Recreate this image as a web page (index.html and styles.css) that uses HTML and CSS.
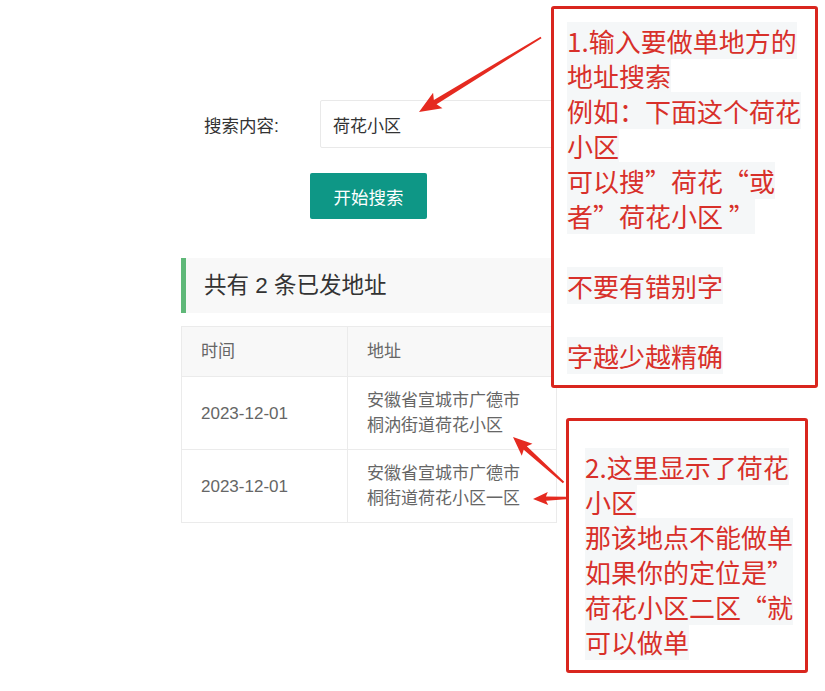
FILE: index.html
```html
<!DOCTYPE html>
<html lang="zh-CN">
<head>
<meta charset="utf-8">
<title>搜索已发地址</title>
<link rel="stylesheet" href="styles.css">
</head>
<body>
<div class="page">
  <form class="search">
    <div class="search-row">
      <label class="search-label">搜索内容:</label>
      <input class="search-input" type="text" value="荷花小区">
    </div>
    <div class="search-actions">
      <button class="btn" type="button">开始搜索</button>
    </div>
  </form>
  <div class="quote">共有 2 条已发地址</div>
  <table class="table">
    <colgroup><col class="col-time"><col class="col-addr"></colgroup>
    <thead>
      <tr><th>时间</th><th>地址</th></tr>
    </thead>
    <tbody>
      <tr><td>2023-12-01</td><td>安徽省宣城市广德市<br>桐汭街道荷花小区</td></tr>
      <tr><td>2023-12-01</td><td>安徽省宣城市广德市<br>桐街道荷花小区一区</td></tr>
    </tbody>
  </table>
</div>

<div class="note note-1">
  <div class="line"><span>1.输入要做单地方的</span></div>
  <div class="line"><span>地址搜索</span></div>
  <div class="line"><span>例如：下面这个荷花</span></div>
  <div class="line"><span>小区</span></div>
  <div class="line"><span>可以搜”荷花“或</span></div>
  <div class="line"><span>者”荷花小区 ”</span></div>
  <div class="line"></div>
  <div class="line"><span>不要有错别字</span></div>
  <div class="line"></div>
  <div class="line"><span>字越少越精确</span></div>
</div>

<div class="note note-2">
  <div class="line"><span>2.这里显示了荷花</span></div>
  <div class="line"><span>小区</span></div>
  <div class="line"><span>那该地点不能做单</span></div>
  <div class="line"><span>如果你的定位是”</span></div>
  <div class="line"><span>荷花小区二区“就</span></div>
  <div class="line"><span>可以做单</span></div>
</div>

<svg class="arrows" width="825" height="691" viewBox="0 0 825 691" xmlns="http://www.w3.org/2000/svg">
  <g fill="#e52a20">
    <polygon transform="translate(419,112) rotate(-31.4)" points="0,0 22,-9 19,-2.6 143,-0.9 143,0.9 19,2.6 22,9"/>
    <polygon transform="translate(513,437) rotate(42)" points="0,0 19,-8 16.5,-2.3 68,-1 68,1 16.5,2.3 19,8"/>
    <polygon transform="translate(533,499) rotate(-1.7)" points="0,0 15,-6.5 13,-2.2 33,-1.2 33,1.2 13,2.2 15,6.5"/>
  </g>
</svg>
</body>
</html>
```

FILE: styles.css
```css
html, body {
  margin: 0;
  padding: 0;
  background: #ffffff;
}

body {
  font-family: "Liberation Sans", "Noto Sans CJK SC", sans-serif;
  color: #333333;
  width: 825px;
  height: 691px;
  overflow: hidden;
  position: relative;
}

.page {
  width: 375px;
  padding: 100px 0 0 181px;
}

.search {
  margin: 0;
}

.search-row {
  display: flex;
  align-items: center;
  height: 48px;
}

.search-label {
  flex: none;
  width: 139px;
  box-sizing: border-box;
  padding-left: 23px;
  font-size: 17.5px;
  color: #333333;
}

.search-input {
  flex: none;
  width: 240px;
  height: 48px;
  box-sizing: border-box;
  border: 1px solid #e9e9e9;
  border-radius: 2px;
  padding: 0 12px;
  font-family: "Liberation Sans", "Noto Sans CJK SC", sans-serif;
  font-size: 17px;
  color: #333333;
  background: #ffffff;
  outline: none;
}

.search-actions {
  display: flex;
  justify-content: center;
  margin-top: 25px;
}

.btn {
  width: 117px;
  height: 46px;
  border: 0;
  border-radius: 2px;
  background: #0e9786;
  color: #ffffff;
  font-family: "Noto Sans CJK SC", sans-serif;
  font-size: 17.5px;
  padding: 0;
}

.quote {
  margin-top: 39px;
  height: 55px;
  box-sizing: border-box;
  border-left: 5px solid #5fb878;
  background: #f8f8f8;
  padding: 0 0 6px 18px;
  display: flex;
  align-items: center;
  font-size: 22.5px;
  color: #333333;
}

.table {
  margin-top: 13px;
  width: 375px;
  border-collapse: collapse;
  table-layout: fixed;
}

.col-time {
  width: 166px;
}

.col-addr {
  width: 209px;
}

.table th,
.table td {
  border: 1px solid #ebebeb;
  padding: 0 19px;
  font-size: 17px;
  line-height: 25px;
  color: #666666;
  text-align: left;
  font-weight: normal;
  vertical-align: middle;
}

.table thead tr {
  height: 50px;
}

.table th {
  background: #f8f8f8;
}

.table tbody tr {
  height: 73px;
}

.note {
  position: absolute;
  box-sizing: border-box;
  border: 3px solid #d9261e;
  border-radius: 3px;
  background: #ffffff;
  font-family: "Noto Sans CJK SC", sans-serif;
  font-size: 26px;
  line-height: 35px;
  color: #d8302a;
}

.note-1 {
  left: 551px;
  top: 6px;
  width: 267px;
  height: 382px;
  padding: 14px 0 0 13px;
}

.note-2 {
  left: 566px;
  top: 418px;
  width: 242px;
  height: 255px;
  padding: 28px 0 0 16px;
}

.line {
  height: 35px;
  white-space: nowrap;
}

.line span {
  background: #f5f7f8;
}

.arrows {
  position: absolute;
  left: 0;
  top: 0;
  pointer-events: none;
}
```
